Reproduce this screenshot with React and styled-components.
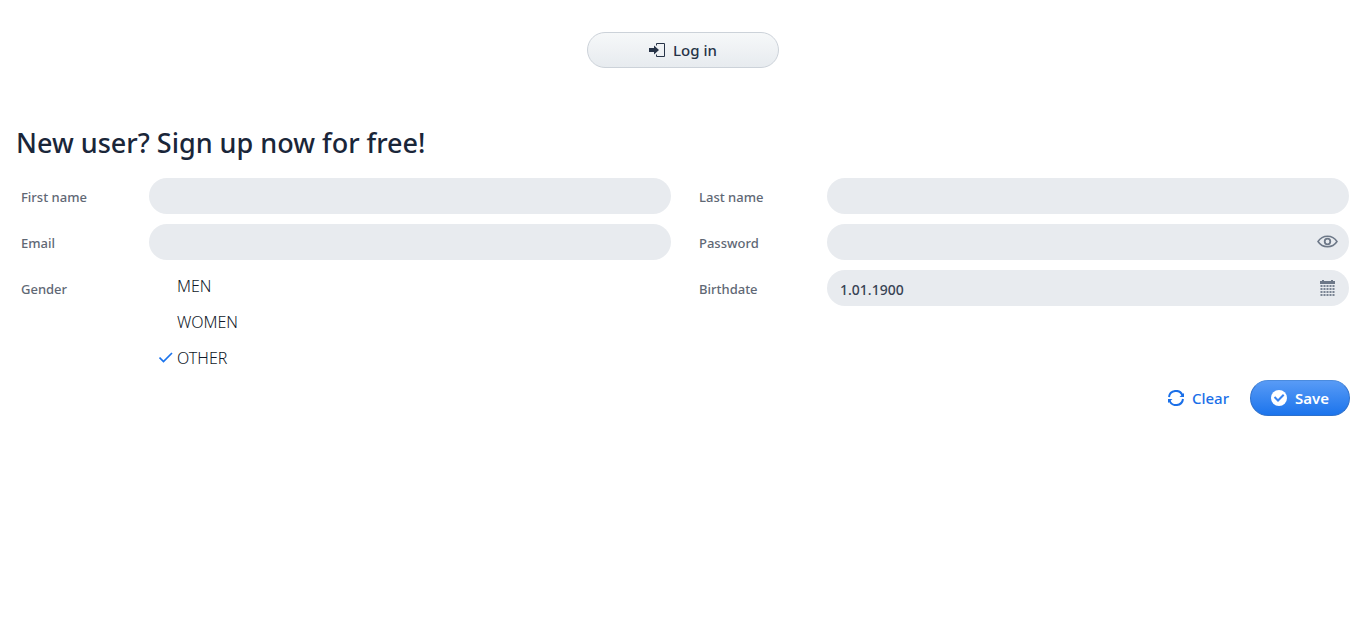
import React, { useState } from 'react';
import styled, { createGlobalStyle } from 'styled-components';

const GlobalStyle = createGlobalStyle`
  *, *::before, *::after { box-sizing: border-box; }
  body {
    margin: 0;
    background: #fff;
    color: #2c3648;
    font-family: "Noto Sans", "Open Sans", sans-serif;
    font-size: 15px;
  }
  input, button { font-family: inherit; }
`;

const Page = styled.main`
  padding: 32px 16px;
`;

const LoginBar = styled.div`
  display: flex;
  justify-content: center;
`;

const Button = styled.button`
  display: inline-flex;
  align-items: center;
  justify-content: center;
  gap: 8px;
  height: 36px;
  padding: 0 20px;
  border: 1px solid transparent;
  border-radius: 18px;
  background: transparent;
  font-size: 15px;
  font-weight: 500;
  line-height: 20px;
  cursor: pointer;
`;

const LoginButton = styled(Button)`
  width: 192px;
  border-color: #ccd2d9;
  background: linear-gradient(#f6f8f9, #e7ebef);
  color: #263347;
`;

const ClearButton = styled(Button)`
  color: #1a6fe8;
`;

const SaveButton = styled(Button)`
  width: 100px;
  padding: 0;
  border-color: #2d70cc;
  border-top-color: #4b8bde;
  background: linear-gradient(#5a9cf6, #1a73ec);
  background-origin: border-box;
  color: #fff;
  font-weight: 600;
`;

const Title = styled.h2`
  margin: 56px 0 16px;
  color: #1a2639;
  font-size: 27px;
  font-weight: 500;
  line-height: 38px;
`;

const FormGrid = styled.div`
  display: grid;
  grid-template-columns: 1fr 1fr;
  gap: 8px 28px;
  padding: 0 1px 0 5px;
`;

const FieldRow = styled.div`
  display: grid;
  grid-template-columns: 128px 1fr;
  align-items: start;
`;

const Label = styled.label`
  color: #5f6875;
  font-size: 13px;
  font-weight: 500;
  line-height: 38px;
`;

const InputBox = styled.div`
  display: flex;
  align-items: center;
  height: 36px;
  padding-right: 10px;
  border-radius: 18px;
  background: #e8ebef;
`;

const TextInput = styled.input`
  flex: 1;
  min-width: 0;
  height: 36px;
  padding: 2px 13px 0;
  border: 0;
  border-radius: 18px;
  outline: none;
  background: transparent;
  color: #384354;
  font-size: 14px;
  font-weight: 500;
`;

const IconButton = styled.button`
  display: flex;
  padding: 0;
  border: 0;
  background: transparent;
  color: #6d7888;
  cursor: pointer;
`;

const RadioList = styled.div`
  display: flex;
  flex-direction: column;
`;

const RadioOption = styled.label`
  display: grid;
  grid-template-columns: 28px auto;
  align-items: center;
  justify-content: start;
  height: 36px;
  padding-bottom: 4px;
  color: #101828;
  font-size: 16px;
  font-weight: 300;
  line-height: 32px;
  cursor: pointer;
`;

const RadioInput = styled.input`
  grid-area: 1 / 1;
  width: 28px;
  height: 32px;
  margin: 0;
  appearance: none;
  outline: none;
`;

const CheckMark = styled.svg`
  grid-area: 1 / 1;
  justify-self: end;
  margin-right: 4px;
  visibility: hidden;
  pointer-events: none;

  ${RadioInput}:checked + & { visibility: visible; }
`;

const OptionText = styled.span`
  grid-area: 1 / 2;
`;

const Actions = styled.div`
  display: flex;
  justify-content: flex-end;
  margin-top: 2px;
`;

const LoginIcon = () => (
  <svg width="16" height="16" viewBox="0 0 16 16" aria-hidden="true">
    <path d="M0 6h5V3.500L10 8l-5 4.500V10H0z" fill="currentColor" />
    <path d="M7.500 3.500v-2h8v13h-8v-2" fill="none" stroke="currentColor" />
  </svg>
);

const ClearIcon = () => (
  <svg width="16" height="16" viewBox="0 0 16 16" fill="none" stroke="currentColor" strokeWidth="2" aria-hidden="true">
    <path d="M1 7a7 7 0 0 1 13.500-1.500M15 9a7 7 0 0 1-13.500 1.500" />
    <path d="M16 3v4h-4.500zM0 13V9h4.500z" fill="currentColor" stroke="none" />
  </svg>
);

const SaveIcon = () => (
  <svg width="16" height="16" viewBox="0 0 16 16" aria-hidden="true">
    <circle cx="8" cy="8" r="8" fill="#fff" />
    <path d="M3.500 7l3.500 3.500L12.700 4.800" fill="none" stroke="#3984f1" strokeWidth="2" />
  </svg>
);

const EyeIcon = () => (
  <svg width="22" height="16" viewBox="0 0 22 16" fill="none" stroke="currentColor" strokeWidth="1.500" aria-hidden="true">
    <path d="M1 7.500C5.500 .5 15.500 .5 20 7.500 15.500 14.500 5.500 14.500 1 7.500z" />
    <circle cx="10.500" cy="7.500" r="2.800" strokeWidth="1.800" />
  </svg>
);

const dotColumns = [0, 3, 6, 9, 12];
const dotRows = [5, 8, 11, 14];

const CalendarIcon = () => (
  <svg width="22" height="18" viewBox="0 0 22 18" aria-hidden="true">
    <g transform="translate(3 1)" fill="currentColor">
      <path d="M0 1h2V0h2v1h7V0h2v1h2v3H0z" />
      {dotRows.map((y) => dotColumns.map((x) => (
        <rect key={`${x}-${y}`} x={x + 0.5} y={y} width="2" height="2" opacity="0.9" />
      )))}
    </g>
  </svg>
);

const emptyForm = {
  firstName: '', lastName: '', email: '', password: '', birthdate: '1.01.1900', gender: 'OTHER',
};

const genders = ['MEN', 'WOMEN', 'OTHER'];

function Field({ id, label, type = 'text', value, onChange, children }) {
  return (
    <FieldRow>
      <Label htmlFor={id}>{label}</Label>
      <InputBox>
        <TextInput id={id} type={type} value={value} onChange={(e) => onChange(id, e.target.value)} />
        {children}
      </InputBox>
    </FieldRow>
  );
}

export default function App() {
  const [form, setForm] = useState(emptyForm);
  const [visible, setVisible] = useState(false);
  const update = (key, value) => setForm((f) => ({ ...f, [key]: value }));

  return (
    <>
      <GlobalStyle />
      <Page>
        <LoginBar>
          <LoginButton type="button"><LoginIcon />Log in</LoginButton>
        </LoginBar>
        <Title>New user? Sign up now for free!</Title>
        <form onSubmit={(e) => e.preventDefault()}>
          <FormGrid>
            <Field id="firstName" label="First name" value={form.firstName} onChange={update} />
            <Field id="lastName" label="Last name" value={form.lastName} onChange={update} />
            <Field id="email" label="Email" type="email" value={form.email} onChange={update} />
            <Field id="password" label="Password" type={visible ? 'text' : 'password'} value={form.password} onChange={update}>
              <IconButton type="button" aria-label="Show password" onClick={() => setVisible(!visible)}><EyeIcon /></IconButton>
            </Field>
            <FieldRow>
              <Label as="span" id="genderLabel">Gender</Label>
              <RadioList role="radiogroup" aria-labelledby="genderLabel">
                {genders.map((g) => (
                  <RadioOption key={g}>
                    <RadioInput type="radio" name="gender" checked={form.gender === g} onChange={() => update('gender', g)} />
                    <CheckMark width="14" height="12" viewBox="0 0 14 12" aria-hidden="true">
                      <path d="M.5 5.500l4 4 8.500-8.500" fill="none" stroke="#1a73ec" strokeWidth="1.700" />
                    </CheckMark>
                    <OptionText>{g}</OptionText>
                  </RadioOption>
                ))}
              </RadioList>
            </FieldRow>
            <Field id="birthdate" label="Birthdate" value={form.birthdate} onChange={update}>
              <IconButton type="button" aria-label="Open calendar"><CalendarIcon /></IconButton>
            </Field>
          </FormGrid>
          <Actions>
            <ClearButton type="button" onClick={() => setForm(emptyForm)}><ClearIcon />Clear</ClearButton>
            <SaveButton type="submit"><SaveIcon />Save</SaveButton>
          </Actions>
        </form>
      </Page>
    </>
  );
}
